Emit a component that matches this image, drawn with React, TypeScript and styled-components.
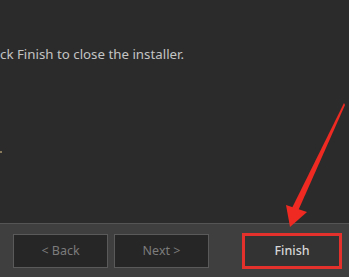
import styled, { createGlobalStyle } from 'styled-components'

const GlobalStyle = createGlobalStyle`
  html, body {
    margin: 0;
    padding: 0;
    background: #2b2b2b;
  }
  body {
    font-family: 'Noto Sans', 'DejaVu Sans', sans-serif;
  }
`

const Window = styled.div`
  position: relative;
  width: 349px;
  height: 277px;
  display: flex;
  flex-direction: column;
  overflow: hidden;
  background: #2b2b2b;
`

const Content = styled.div`
  flex: 1;
  padding-top: 44px;
  overflow: hidden;
`

const Message = styled.p`
  margin: 0;
  font-size: 13.3px;
  line-height: 20px;
  color: #c4c4c4;
  white-space: nowrap;
`

const Dot = styled.span`
  display: block;
  width: 2px;
  height: 2px;
  margin-top: 87px;
  background: #8a7a5c;
`

const Footer = styled.div`
  height: 54px;
  border-top: 1px solid #555555;
  background: #3f3f3f;
  display: flex;
  align-items: center;
  padding: 0 7px 0 13px;
  box-sizing: border-box;
`

const NavGroup = styled.div`
  display: flex;
  gap: 6px;
`

const Button = styled.button<{ $primary?: boolean }>`
  width: ${({ $primary }) => ($primary ? '100px' : '95px')};
  height: ${({ $primary }) => ($primary ? '36px' : '34px')};
  margin-left: ${({ $primary }) => ($primary ? 'auto' : '0')};
  background: ${({ $primary }) => ($primary ? '#333333' : '#262626')};
  border: ${({ $primary }) => ($primary ? '3px solid #e5312b' : '1px solid #5a5a5a')};
  color: ${({ $primary }) => ($primary ? '#d6d6d6' : '#7c7c7c')};
  font-family: 'Noto Sans', 'DejaVu Sans', sans-serif;
  font-size: 12.5px;
  font-weight: ${({ $primary }) => ($primary ? 500 : 400)};
  padding: 0;
  box-sizing: border-box;
`

const Arrow = styled.svg`
  position: absolute;
  left: 0;
  top: 0;
  pointer-events: none;
`

export default function App() {
  return (
    <>
      <GlobalStyle />
      <Window>
        <Content>
          <Message>ck Finish to close the installer.</Message>
          <Dot />
        </Content>
        <Footer>
          <NavGroup>
            <Button disabled>&lt; Back</Button>
            <Button disabled>Next &gt;</Button>
          </NavGroup>
          <Button $primary>Finish</Button>
        </Footer>
        <Arrow width="349" height="277" viewBox="0 0 349 277">
          <polygon points="344,103 345,105 298,211 292,208" fill="#ee2a22" />
          <polygon points="286,205 307,212 290,227" fill="#ee2a22" />
        </Arrow>
      </Window>
    </>
  )
}
